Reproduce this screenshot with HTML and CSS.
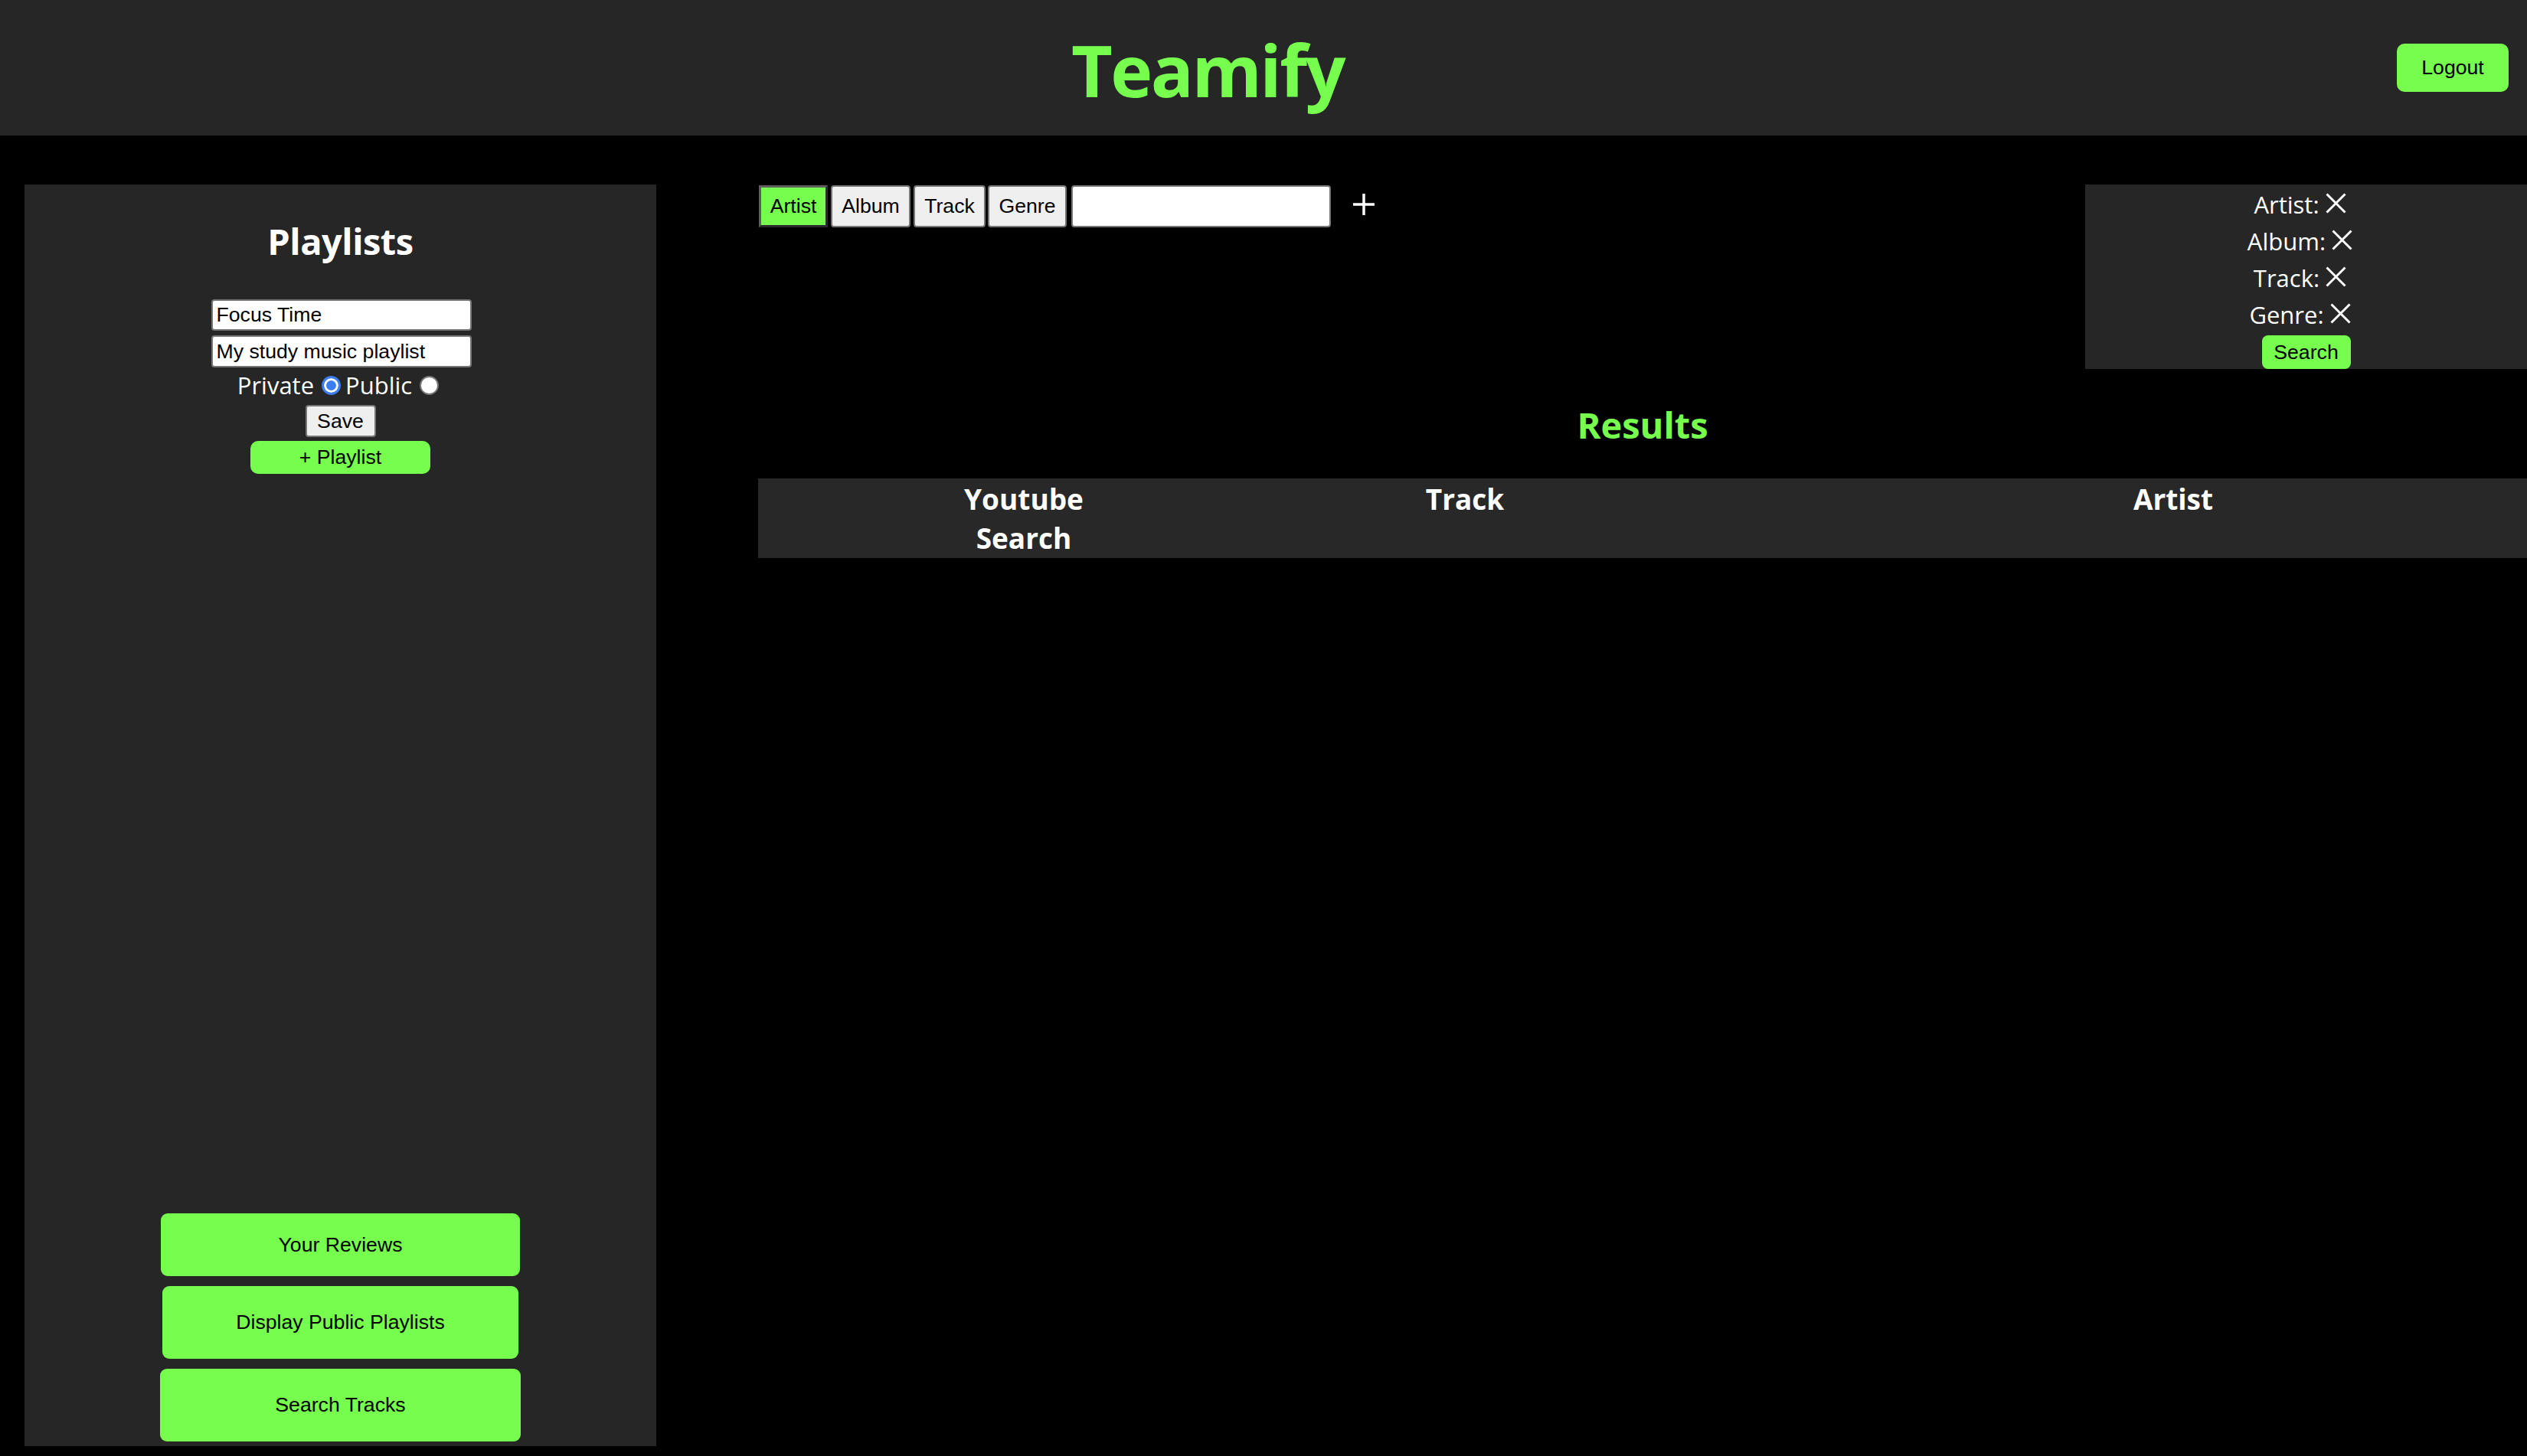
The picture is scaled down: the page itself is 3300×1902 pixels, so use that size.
FILE: index.html
```html
<!DOCTYPE html>
<html lang="en">
<head>
<meta charset="utf-8">
<title>Teamify</title>
<link rel="stylesheet" href="styles.css">
</head>
<body>
<header class="topbar">
  <h1 class="brand">Teamify</h1>
  <button class="btn-green logout">Logout</button>
</header>
<div class="layout">
  <aside class="sidebar">
    <div class="playlist-form">
      <h2 class="side-title">Playlists</h2>
      <input class="text-in name-in" type="text" value="Focus Time">
      <input class="text-in desc-in" type="text" value="My study music playlist">
      <div class="privacy">Private<input class="radio" type="radio" name="vis" checked>Public<input class="radio" type="radio" name="vis"></div>
      <button class="btn-grey save">Save</button>
      <button class="btn-green add-pl">+ Playlist</button>
    </div>
    <div class="side-actions">
      <button class="btn-green act act-reviews">Your Reviews</button>
      <button class="btn-green act act-public">Display Public Playlists</button>
      <button class="btn-green act act-search">Search Tracks</button>
    </div>
  </aside>
  <main class="main">
    <div class="top-row">
      <div class="tabs">
        <button class="tab tab-active tab-artist">Artist</button>
        <button class="tab tab-album">Album</button>
        <button class="tab tab-track">Track</button>
        <button class="tab tab-genre">Genre</button>
        <input class="tab-input" type="text">
        <span class="plus"><svg width="30" height="30" viewBox="0 0 30 30"><path d="M15 1V29M1 15H29" stroke="#fff" stroke-width="3.5" fill="none"/></svg></span>
      </div>
      <div class="filters">
        <div class="filter-row">Artist: <svg class="xicon" width="27" height="27" viewBox="0 0 27 27"><path d="M1.5 1.5L25.5 25.5M25.5 1.5L1.5 25.5" stroke="#fff" stroke-width="3" fill="none"/></svg></div>
        <div class="filter-row">Album: <svg class="xicon" width="27" height="27" viewBox="0 0 27 27"><path d="M1.5 1.5L25.5 25.5M25.5 1.5L1.5 25.5" stroke="#fff" stroke-width="3" fill="none"/></svg></div>
        <div class="filter-row">Track: <svg class="xicon" width="27" height="27" viewBox="0 0 27 27"><path d="M1.5 1.5L25.5 25.5M25.5 1.5L1.5 25.5" stroke="#fff" stroke-width="3" fill="none"/></svg></div>
        <div class="filter-row">Genre: <svg class="xicon" width="27" height="27" viewBox="0 0 27 27"><path d="M1.5 1.5L25.5 25.5M25.5 1.5L1.5 25.5" stroke="#fff" stroke-width="3" fill="none"/></svg></div>
        <button class="btn-green search-btn">Search</button>
      </div>
    </div>
    <h2 class="results-title">Results</h2>
    <div class="results-wrap">
      <table class="results">
        <thead>
          <tr>
            <th class="c-yt"><span class="wrap">Youtube Search</span></th>
            <th class="c-track">Track</th>
            <th class="c-artist">Artist</th>
          </tr>
        </thead>
      </table>
    </div>
  </main>
</div>
</body>
</html>
```
FILE: styles.css
```css
html, body {
  margin: 0;
  padding: 0;
  background: #000;
  overflow: hidden;
  height: 1902px;
}
body {
  font-family: "Open Sans", "Noto Sans", sans-serif;
  color: #fff;
}
button, input {
  font-family: "Liberation Sans", Arial, sans-serif;
  font-size: 26.67px;
  color: #000;
  box-sizing: border-box;
  margin: 0;
}
.btn-green {
  background: #76fd4d;
  border: none;
  border-radius: 10px;
  cursor: pointer;
  padding: 0;
}
.btn-grey {
  background: #efefef;
  border: 2px solid #767676;
  border-radius: 4px;
  padding: 0;
}

/* header */
.topbar {
  height: 177px;
  background: #262626;
  display: flex;
  align-items: center;
  padding: 0 24px;
  box-sizing: border-box;
}
.brand {
  flex: 1;
  margin: 0;
  text-align: center;
  font-size: 93px;
  line-height: 96px;
  font-weight: 700;
  color: #76fd4d;
  padding-top: 4px;
  letter-spacing: -2.5px;
}
.logout {
  width: 146px;
  height: 63px;
}

/* layout */
.layout {
  display: flex;
  padding-top: 64px;
}
.sidebar {
  width: 825px;
  height: 1648px;
  margin-left: 32px;
  background: #262626;
  display: flex;
  flex-direction: column;
  justify-content: space-between;
  align-items: center;
}
.playlist-form {
  display: flex;
  flex-direction: column;
  align-items: center;
}
.side-title {
  font-size: 47px;
  font-weight: 700;
  margin: 42px 0 43px;
  line-height: 65px;
  letter-spacing: -0.5px;
}
.text-in {
  width: 340px;
  height: 41px;
  border: 2px solid #767676;
  border-radius: 4px;
  background: #fff;
  padding: 0 5px;
  margin-left: 2px;
}
.desc-in {
  margin-top: 6px;
  height: 42px;
}
.privacy {
  height: 42px;
  line-height: 42px;
  font-size: 31px;
  margin-top: 2px;
  display: flex;
  align-items: center;
}
.radio {
  appearance: none;
  -webkit-appearance: none;
  width: 25px;
  height: 25px;
  border-radius: 50%;
  border: 2px solid #767676;
  background: #fff;
  margin: 0 6px 0 10px;
  box-sizing: border-box;
}
.radio:checked {
  border: 3px solid #3b7ef2;
  background: #3b7ef2;
  box-shadow: inset 0 0 0 3px #fff;
}
.save {
  width: 92px;
  height: 42px;
  margin-top: 5px;
}
.add-pl {
  width: 235px;
  height: 43px;
  margin-top: 5px;
}
.side-actions {
  display: flex;
  flex-direction: column;
  align-items: center;
  padding-bottom: 6px;
}
.act {
  border-radius: 9px;
}
.act-reviews {
  width: 469px;
  height: 82px;
}
.act-public {
  width: 465px;
  height: 95px;
  margin-top: 13px;
}
.act-search {
  width: 471px;
  height: 95px;
  margin-top: 13px;
}

/* main */
.main {
  flex: 1;
  min-width: 0;
  margin-left: 133px;
}
.top-row {
  display: flex;
  justify-content: space-between;
  align-items: flex-start;
}
.tabs {
  display: flex;
  align-items: center;
  padding-top: 1px;
}
.tab {
  height: 55px;
  background: #efefef;
  border: 2px solid #767676;
  border-radius: 4px;
  padding: 0;
  margin-right: 4px;
}
.tab-active {
  background: #76fd4d;
  border: 3px solid;
  border-color: #5e5e5e #2a2a2a #2a2a2a #5e5e5e;
  border-radius: 0;
}
.tab-artist { width: 90px; margin-left: 1px; }
.tab-album { width: 104px; }
.tab-track { width: 94px; margin-right: 3px; }
.tab-genre { width: 103px; margin-right: 6px; }
.tab-input {
  width: 339px;
  height: 55px;
  border: 2px solid #767676;
  border-radius: 4px;
  background: #fff;
}
.plus {
  display: flex;
  margin-left: 28px;
  margin-top: -6px;
}
.filters {
  width: 577px;
  height: 241px;
  background: #262626;
  display: flex;
  flex-direction: column;
  align-items: center;
  padding-top: 2px;
  box-sizing: border-box;
}
.filter-row {
  font-size: 31px;
  line-height: 48px;
  height: 48px;
  white-space: nowrap;
}
.xicon {
  vertical-align: 0px;
  margin-right: 16px;
}
.search-btn {
  width: 116px;
  height: 44px;
  margin-top: 3px;
  border-radius: 8px;
}
.results-title {
  text-align: center;
  color: #76fd4d;
  font-size: 47px;
  font-weight: 700;
  line-height: 65px;
  margin: 41px 0 37px;
}
.results-wrap {
  overflow: hidden;
  width: 100%;
}
.results {
  border-collapse: collapse;
  width: 2544px;
  table-layout: fixed;
  background: #282828;
}
.results th {
  font-size: 37px;
  font-weight: 700;
  line-height: 51px;
  padding: 1px 0;
  vertical-align: top;
  text-align: center;
}
.c-yt { width: 694px; }
.c-track { width: 458px; }
.c-artist { width: 1392px; }
.wrap {
  display: inline-block;
  max-width: 200px;
}
```
